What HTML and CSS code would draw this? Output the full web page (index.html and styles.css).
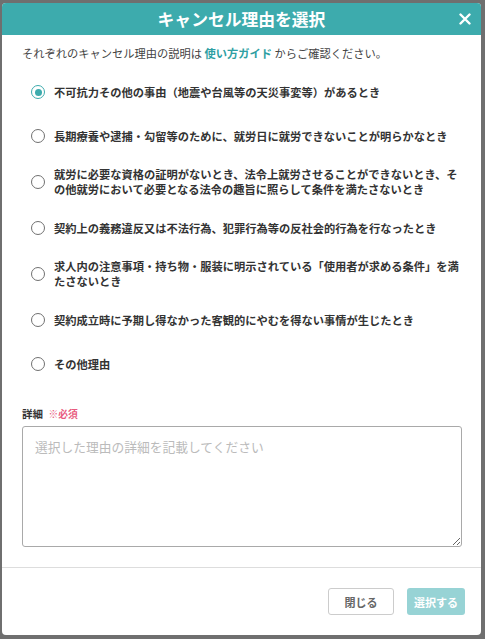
FILE: index.html
```html
<!DOCTYPE html>
<html lang="ja">
<head>
    <meta charset="UTF-8">
    <meta name="viewport" content="width=device-width, initial-scale=1.0">
    <title>キャンセル理由を選択</title>
    <link rel="stylesheet" href="styles.css">
</head>
<body>
    <div class="modal">
        <div class="modal-header">
            <span></span>
            <h1>キャンセル理由を選択</h1>
            <button class="close-btn" aria-label="閉じる">
                <svg width="12" height="12" viewBox="0 0 12 12">
                    <path d="M1.5 1.5 L10.5 10.5 M10.5 1.5 L1.5 10.5" stroke="#ffffff" stroke-width="2.4" stroke-linecap="round"/>
                </svg>
            </button>
        </div>
        <div class="modal-body">
            <p class="intro">それぞれのキャンセル理由の説明は <a href="#">使い方ガイド</a> からご確認ください。</p>
            <div class="options">
                <label class="option">
                    <input type="radio" name="reason" checked>
                    <span>不可抗力その他の事由（地震や台風等の天災事変等）があるとき</span>
                </label>
                <label class="option">
                    <input type="radio" name="reason">
                    <span>長期療養や逮捕・勾留等のために、就労日に就労できないことが明らかなとき</span>
                </label>
                <label class="option">
                    <input type="radio" name="reason">
                    <span>就労に必要な資格の証明がないとき、法令上就労させることができないとき、その他就労において必要となる法令の趣旨に照らして条件を満たさないとき</span>
                </label>
                <label class="option">
                    <input type="radio" name="reason">
                    <span>契約上の義務違反又は不法行為、犯罪行為等の反社会的行為を行なったとき</span>
                </label>
                <label class="option">
                    <input type="radio" name="reason">
                    <span>求人内の注意事項・持ち物・服装に明示されている「使用者が求める条件」を満たさないとき</span>
                </label>
                <label class="option">
                    <input type="radio" name="reason">
                    <span>契約成立時に予期し得なかった客観的にやむを得ない事情が生じたとき</span>
                </label>
                <label class="option">
                    <input type="radio" name="reason">
                    <span>その他理由</span>
                </label>
            </div>
            <div class="detail">
                <div class="detail-label">詳細 <span class="required">※必須</span></div>
                <textarea placeholder="選択した理由の詳細を記載してください"></textarea>
            </div>
        </div>
        <div class="modal-footer">
            <button class="btn btn-close">閉じる</button>
            <button class="btn btn-select" disabled>選択する</button>
        </div>
    </div>
</body>
</html>
```

FILE: styles.css
```css
body {
    margin: 0;
    background-color: #6f6f6f;
    font-family: 'Noto Sans CJK JP', 'Noto Sans', sans-serif;
    color: #333333;
}
.modal {
    width: 479px;
    height: 632px;
    margin: 3px 0 0 2px;
    background-color: #ffffff;
    border-radius: 4px;
    overflow: hidden;
    display: flex;
    flex-direction: column;
}
.modal-header {
    height: 32px;
    background-color: #3dabad;
    display: grid;
    grid-template-columns: 1fr auto 1fr;
    align-items: center;
}
.modal-header h1 {
    margin: 0;
    font-size: 16.8px;
    line-height: 32px;
    font-weight: 700;
    color: #ffffff;
}
.close-btn {
    justify-self: end;
    margin-right: 10px;
    width: 12px;
    height: 12px;
    padding: 0;
    border: none;
    background: none;
    display: flex;
}
.modal-body {
    flex: 1;
    padding: 10px 19px 20px 20px;
    border-bottom: 1px solid #dddddd;
}
.intro {
    margin: 0;
    font-size: 11.25px;
    line-height: 16px;
    color: #444444;
}
.intro a {
    color: #2f9fa3;
    font-weight: 700;
    text-decoration: none;
}
.options {
    display: flex;
    flex-direction: column;
    gap: 18px;
    margin-top: 18px;
    padding-left: 9px;
}
.option {
    display: flex;
    align-items: center;
    gap: 9px;
    min-height: 26px;
    font-size: 11.25px;
    line-height: 15px;
    font-weight: 700;
    color: #333333;
}
.option input {
    appearance: none;
    -webkit-appearance: none;
    flex: none;
    width: 14px;
    height: 14px;
    margin: 0;
    border: 1.5px solid #707070;
    border-radius: 50%;
    box-sizing: border-box;
    display: grid;
    place-items: center;
}
.option input:checked {
    border-color: #3dabad;
}
.option input:checked::after {
    content: "";
    width: 7px;
    height: 7px;
    border-radius: 50%;
    background-color: #3dabad;
}
.detail {
    margin-top: 29px;
}
.detail-label {
    font-size: 10.5px;
    line-height: 16px;
    font-weight: 700;
    color: #333333;
    margin-bottom: 4px;
}
.required {
    color: #e85a7e;
    font-size: 9.75px;
    margin-left: 3px;
}
textarea {
    display: block;
    width: 100%;
    height: 121px;
    box-sizing: border-box;
    padding: 11px 12px;
    border: 1px solid #a9a9a9;
    border-radius: 3px;
    font-family: inherit;
    font-size: 12.75px;
    line-height: 18px;
    resize: vertical;
}
textarea::placeholder {
    color: #bbbbbb;
}
.modal-footer {
    display: flex;
    justify-content: flex-end;
    gap: 13px;
    padding: 20px 16px 0 0;
    height: 48px;
}
.btn {
    height: 27px;
    border-radius: 3px;
    font-family: inherit;
    font-size: 11px;
    font-weight: 700;
    padding: 0;
}
.btn-close {
    width: 66px;
    background-color: #ffffff;
    border: 1px solid #cccccc;
    color: #666666;
}
.btn-select {
    width: 58px;
    background-color: #97d3d5;
    border: none;
    color: #ffffff;
}
```
